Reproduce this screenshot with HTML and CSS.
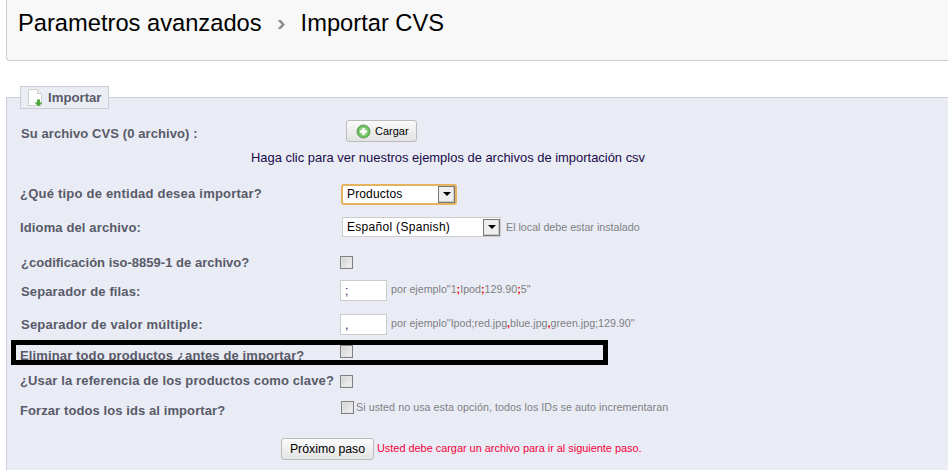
FILE: index.html
```html
<!DOCTYPE html>
<html lang="es">
<head>
<meta charset="utf-8">
<title>Importar CVS</title>
<link rel="stylesheet" href="styles.css">
</head>
<body>
<header class="toolbar">
  <h1 class="crumbs"><span>Parametros avanzados</span><svg class="crumb-sep" width="8" height="9" viewBox="0 0 8 9"><path d="M.5 0l4 4.500-4 4.500h3.500l4-4.500-4-4.500z" fill="#8f8f8f"/></svg><span>Importar CVS</span></h1>
</header>
<main class="panel">
  <div class="legend">
    <svg class="legend-icon" width="15" height="18" viewBox="0 0 15 18">
      <path d="M.5.5h9l4 4v12h-13z" fill="#fff" stroke="#cfcfcf"/>
      <path d="M9.500.5v4h4" fill="#eee" stroke="#cfcfcf"/>
      <path d="M9 10.500h3v3h2.500l-4 4-4-4h2.500z" fill="#4fa43a"/>
    </svg>
    <span>Importar</span>
  </div>
  <div class="row m3">
    <label class="lab nudge narrow">Su archivo CVS (0 archivo) :</label>
    <button class="btn-load" type="button">
      <svg width="15" height="15" viewBox="0 0 15 15"><circle cx="7.500" cy="7.500" r="6.500" fill="#6dbb62" stroke="#5aa552"/><circle cx="7.500" cy="7.500" r="4.500" fill="#8ed081"/><path d="M6.300 4h2.400v2.300H11v2.400H8.700V11H6.300V8.700H4V6.300h2.300z" fill="#fff"/></svg>
      <span>Cargar</span>
    </button>
  </div>
  <div class="row m2"><a class="help">Haga clic para ver nuestros ejemplos de archivos de importación csv</a></div>
  <div class="row m14">
    <label class="lab wide">¿Qué tipo de entidad desea importar?</label>
    <div class="sel sel-focus"><span class="sel-text">Productos</span><span class="sel-arrow"><i></i></span></div>
  </div>
  <div class="row m12">
    <label class="lab">Idioma del archivo:</label>
    <div class="sel sel-lang"><span class="sel-text sel-text-lang">Español (Spanish)</span><span class="sel-arrow"><i></i></span><small class="hint hint-sel">El local debe estar instalado</small></div>
  </div>
  <div class="row m13">
    <label class="lab nudge tight">¿codificación iso-8859-1 de archivo?</label>
    <input class="check" type="checkbox">
  </div>
  <div class="row m6">
    <label class="lab nudge low-s">Separador de filas:</label>
    <input class="txt" type="text" value=";">
    <small class="hint hint-up">por ejemplo"1<b>;</b>Ipod<b>;</b>129.90<b>;</b>5"</small>
  </div>
  <div class="row m12">
    <label class="lab nudge wide">Separador de valor múltiple:</label>
    <input class="txt" type="text" value=",">
    <small class="hint hint-up">por ejemplo"Ipod;red.jpg<b>,</b>blue.jpg<b>,</b>green.jpg;129.90"</small>
  </div>
  <div class="row m6">
    <label class="lab low">Eliminar todo productos ¿antes de importar?</label>
    <input class="check check-up" type="checkbox">
  </div>
  <div class="row m7">
    <label class="lab lab-up">¿Usar la referencia de los productos como clave?</label>
    <input class="check" type="checkbox">
  </div>
  <div class="row m4">
    <label class="lab low narrow">Forzar todos los ids al importar?</label>
    <input class="check check-in" type="checkbox">
    <small class="hint hint-long">Si usted no usa esta opción, todos los IDs se auto incrementaran</small>
  </div>
  <div class="row m21 submit-row">
    <button class="btn-next" type="button">Próximo paso</button>
    <small class="error">Usted debe cargar un archivo para ir al siguiente paso.</small>
  </div>
</main>
<div class="redact"></div>
</body>
</html>
```
FILE: styles.css
```css
html, body { margin: 0; padding: 0; }
body {
  width: 948px;
  height: 470px;
  overflow: hidden;
  position: relative;
  background: #fff;
  font-family: "Liberation Sans", Arial, sans-serif;
  color: #000;
}
.toolbar {
  box-sizing: border-box;
  height: 61px;
  margin-left: 6px;
  background: #f8f8f8;
  border: 1px solid #ccc;
  border-top: 0;
  border-right: 0;
  border-bottom-left-radius: 4px;
}
.crumbs {
  margin: 0;
  padding: 9px 0 0 11px;
  display: flex;
  align-items: center;
  font-size: 23.7px;
  line-height: 28px;
  font-weight: 400;
  color: #000;
}
.crumb-sep { margin: 3px 16px 0 15px; }
.panel {
  position: relative;
  box-sizing: border-box;
  height: 373px;
  margin: 36px 0 0 6px;
  padding-top: 21px;
  background: #e9ecf4;
  border-top: 1px solid #ccced7;
  border-left: 1px solid #ccced7;
}
.legend {
  position: absolute;
  left: 13px;
  top: -12px;
  box-sizing: border-box;
  width: 89px;
  height: 23px;
  display: flex;
  align-items: center;
  padding-left: 7px;
  gap: 5px;
  background: #ebedf4;
  border: 1px solid #ccced7;
  font-size: 13.2px;
  font-weight: 700;
  color: #585a69;
}
.row {
  display: flex;
  align-items: center;
  height: 22px;
}
.m2 { margin-top: 2px; }
.m3 { margin-top: 3px; }
.m4 { margin-top: 4px; }
.m6 { margin-top: 6px; }
.m7 { margin-top: 7px; }
.m12 { margin-top: 12px; }
.m13 { margin-top: 13px; }
.m14 { margin-top: 14px; }
.m21 { margin-top: 21px; }
.lab {
  box-sizing: border-box;
  width: 333px;
  flex: none;
  padding-left: 13px;
  font-size: 13px;
  font-weight: 700;
  letter-spacing: .13px;
  color: #585a69;
  white-space: nowrap;
}
.wide { letter-spacing: .22px; }
.narrow { letter-spacing: .09px; }
.tight { letter-spacing: .02px; }
.nudge { padding-left: 14px; }
.low { padding-top: 6px; }
.low-s { padding-top: 3px; }
.lab-up { margin-top: -2px; }
.btn-load {
  box-sizing: border-box;
  width: 71px;
  height: 22px;
  margin: -4px 0 0 6px;
  padding: 0 0 0 9px;
  display: flex;
  align-items: center;
  gap: 4px;
  background: linear-gradient(#fafafa, #e2e2e2);
  border: 1px solid #bbb;
  border-radius: 3px;
  font-family: inherit;
  font-size: 11px;
  color: #000;
}
.help {
  margin-left: 244px;
  font-size: 12.95px;
  color: #1a0a4a;
  white-space: nowrap;
}
.sel {
  position: relative;
  box-sizing: border-box;
  display: flex;
  align-items: center;
  justify-content: space-between;
  background: #fff;
  font-size: 12px;
  color: #000;
}
.sel-text { padding-left: 4px; font-size: 12px; letter-spacing: .15px; }
.sel-text-lang { letter-spacing: .3px; }
.sel-focus {
  width: 116px;
  height: 21px;
  margin: 2px 0 0 1px;
  border: 2px solid #e3b35e;
  border-radius: 3px;
}
.sel-lang {
  width: 159px;
  height: 20px;
  margin-left: 2px;
  border: 1px solid #ccc;
}
.sel-arrow {
  box-sizing: border-box;
  width: 17px;
  height: 17px;
  display: flex;
  align-items: center;
  justify-content: center;
  background: #eee;
  border: 1px solid #777;
  box-shadow: inset -1px -1px 0 #ccc;
}
.sel-arrow i {
  width: 0;
  height: 0;
  border: 4px solid transparent;
  border-top-color: #000;
  border-bottom: 0;
}
.hint {
  margin-left: 4px;
  font-size: 10.7px;
  color: #7f7f85;
  white-space: nowrap;
}
.hint b { color: #e00; font-weight: 700; }
.hint-up { margin-top: -3px; }
.hint-long { margin-left: 2px; letter-spacing: .06px; }
.hint-sel { position: absolute; left: 163px; top: 3px; margin: 0; }
.check {
  appearance: none;
  box-sizing: border-box;
  width: 13px;
  height: 13px;
  margin: 0;
  background: linear-gradient(135deg, #cfcfcf, #f6f6f6);
  border: 1px solid #808080;
  box-shadow: inset 0 0 0 1px #e4e4e4;
}
.check-in { margin: 0 0 0 1px; }
.check-up { margin-top: -2px; }
.txt {
  box-sizing: border-box;
  width: 47px;
  height: 21px;
  margin: 0;
  padding: 2px 0 0 4px;
  background: #fff;
  border: 1px solid #ccc;
  font-family: inherit;
  font-size: 12px;
  color: #3a0a6a;
}
.submit-row { padding-left: 274px; }
.btn-next {
  box-sizing: border-box;
  width: 93px;
  height: 22px;
  margin-top: -3px;
  padding: 1px 0 0;
  background: linear-gradient(#fbfbfb, #e4e4e4);
  border: 1px solid #bbb;
  border-radius: 3px;
  font-family: inherit;
  font-size: 12.3px;
  color: #000;
}
.error {
  margin: -4px 0 0 3px;
  font-size: 10.9px;
  color: #f5003c;
  white-space: nowrap;
}
.redact {
  position: absolute;
  left: 11px;
  top: 340px;
  box-sizing: border-box;
  width: 597px;
  height: 25px;
  border: 5px solid #000;
}
```
